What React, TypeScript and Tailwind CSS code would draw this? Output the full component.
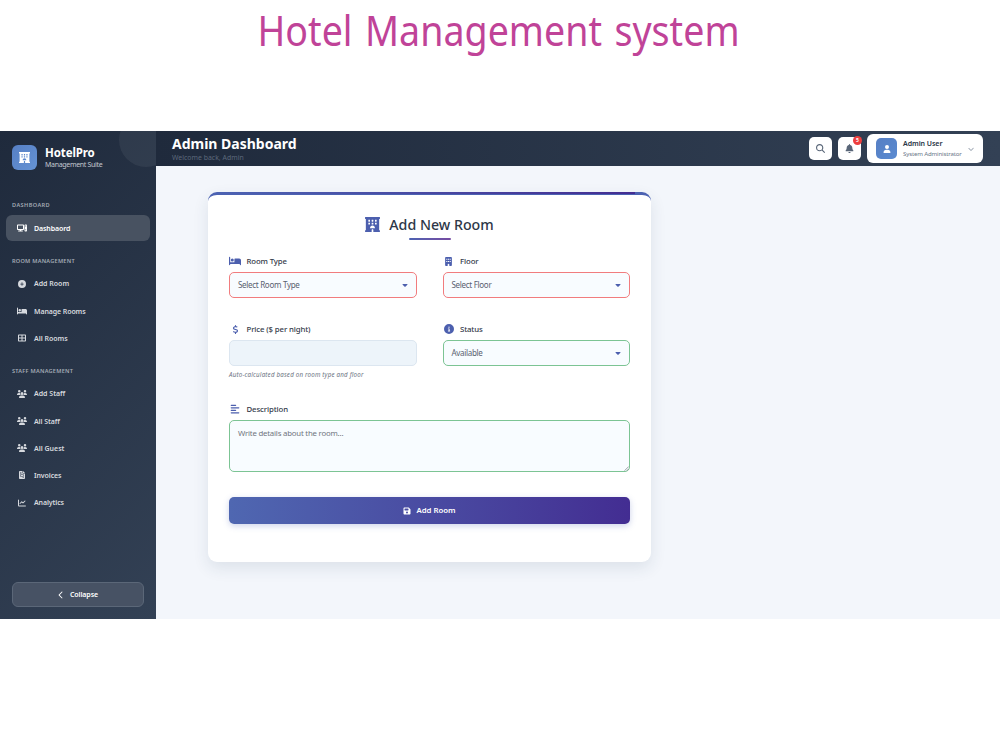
import React from 'react';
import { IconType } from 'react-icons';
import { FaHotel } from 'react-icons/fa';
import {
  FaAlignLeft,
  FaBed,
  FaBell,
  FaBuilding,
  FaCaretDown,
  FaChartLine,
  FaChevronDown,
  FaChevronLeft,
  FaCircleInfo,
  FaCirclePlus,
  FaComputer,
  FaDollarSign,
  FaFileInvoice,
  FaFloppyDisk,
  FaMagnifyingGlass,
  FaTableCellsLarge,
  FaUser,
  FaUsers,
} from 'react-icons/fa6';

type NavItem = { label: string; icon: IconType; size: string; track?: string; active?: boolean };

const navSections: { title: string; track: string; items: NavItem[] }[] = [
  {
    title: 'DASHBOARD',
    track: 'tracking-[0.4px]',
    items: [{ label: 'Dashbaord', icon: FaComputer, size: 'size-[10px]', track: 'tracking-[-0.1px]', active: true }],
  },
  {
    title: 'ROOM MANAGEMENT',
    track: 'tracking-[0.24px]',
    items: [
      { label: 'Add Room', icon: FaCirclePlus, size: 'size-2' },
      { label: 'Manage Rooms', icon: FaBed, size: 'size-[10px]', track: 'tracking-[-0.1px]' },
      { label: 'All Rooms', icon: FaTableCellsLarge, size: 'size-2' },
    ],
  },
  {
    title: 'STAFF MANAGEMENT',
    track: 'tracking-[0.24px]',
    items: [
      { label: 'Add Staff', icon: FaUsers, size: 'size-[10px]' },
      { label: 'All Staff', icon: FaUsers, size: 'size-[10px]', track: 'tracking-[-0.08px]' },
      { label: 'All Guest', icon: FaUsers, size: 'size-[10px]' },
      { label: 'Invoices', icon: FaFileInvoice, size: 'size-2', track: 'tracking-[-0.1px]' },
      { label: 'Analytics', icon: FaChartLine, size: 'size-2', track: 'tracking-[-0.1px]' },
    ],
  },
];

function Sidebar() {
  return (
    <aside className="relative flex w-[156px] shrink-0 flex-col overflow-hidden bg-linear-135 from-[#1f2a3c] to-[#334155]">
      {/* corner circle */}
      <div className="absolute -top-[18px] left-[119px] size-[54px] rounded-full bg-white/[0.06]" />

      <div className="flex h-[68px] items-start gap-2 px-3 pt-3.5">
        <div className="flex size-[25px] items-center justify-center rounded-md bg-linear-135 from-[#567fc4] to-[#6593d4]">
          <FaHotel className="size-[11px] text-white" preserveAspectRatio="none" />
        </div>
        <div className="pt-px">
          <p className="text-[11.5px] leading-[14px] font-bold tracking-[-0.1px] text-white">HotelPro</p>
          <p className="text-[7px] leading-[9px] tracking-[-0.31px] text-[#c3c8d0]">Management Suite</p>
        </div>
      </div>

      <nav className="flex flex-col gap-[13.75px]">
        {navSections.map((section) => (
          <div key={section.title}>
            <p className={`mb-[4.25px] h-3 pl-3 text-[5.6px] leading-3 font-semibold text-[#a3aab5] ${section.track}`}>
              {section.title}
            </p>
            <ul className="flex flex-col gap-[1.75px] px-1.5">
              {section.items.map((item) => (
                <li
                  key={item.label}
                  className={`flex h-[25.5px] items-center rounded-md pl-[11px] ${
                    item.active ? 'bg-[#485261] text-white' : 'text-[#d6d9de]'
                  }`}
                >
                  <span className="flex w-[10px] justify-center">
                    <item.icon className={item.size} />
                  </span>
                  <span className={`pt-[2px] pl-[7px] text-[7px] font-semibold whitespace-nowrap ${item.track ?? ''}`}>
                    {item.label}
                  </span>
                </li>
              ))}
            </ul>
          </div>
        ))}
      </nav>

      <button className="mx-3 mt-auto mb-3 flex h-[25px] items-center justify-center gap-[5px] rounded-md border border-[#5b6778] bg-[#475264] pr-px text-[7px] font-semibold text-white">
        <FaChevronLeft className="size-[8px]" />
        <span className="pt-[1.5px] tracking-[-0.08px]">Collapse</span>
      </button>
    </aside>
  );
}

function Header() {
  return (
    <header className="flex h-[35px] items-center bg-linear-to-r from-[#1f2a3c] to-[#334155] pr-[17px] pl-4">
      <div className="flex-1">
        <h1 className="-mt-px text-[14px] leading-[17px] font-bold text-white">Admin Dashboard</h1>
        <p className="pt-px text-[6.9px] leading-[9px] tracking-[0.02px] text-[#5c687b]">Welcome back, Admin</p>
      </div>
      <button className="mr-[6px] flex size-[23px] items-center justify-center rounded-[5px] bg-white">
        <FaMagnifyingGlass className="size-[9px] text-[#596678]" />
      </button>
      <button className="relative mr-[6px] flex size-[23px] items-center justify-center rounded-[5px] bg-white">
        <FaBell className="size-[9px] text-[#596678]" />
        <span className="absolute -top-px -right-px flex size-[9px] items-center justify-center rounded-full bg-[#ee3e3e] text-[5px] font-bold text-white">
          5
        </span>
      </button>
      <div className="flex h-[29px] w-[116px] items-center rounded-md bg-white pl-[9px]">
        <div className="flex size-[21px] items-center justify-center rounded-[5px] bg-linear-135 from-[#567fc4] to-[#5a8ad0]">
          <FaUser className="size-2 text-white" />
        </div>
        <div className="w-[71px] pt-px pl-[6px]">
          <p className="text-[7px] leading-[10px] font-semibold tracking-[-0.05px] whitespace-nowrap text-[#283445]">Admin User</p>
          <p className="text-[6.1px] leading-[10px] tracking-[-0.16px] whitespace-nowrap text-[#6b7789]">System Administrator</p>
        </div>
        <FaChevronDown className="size-[6px] text-[#8b96a5]" />
      </div>
    </header>
  );
}

function FieldLabel({ icon: Icon, iconClass, children }: { icon: IconType; iconClass: string; children: React.ReactNode }) {
  return (
    <label className="flex h-4 items-center gap-[5px] text-[7.8px] font-medium tracking-[-0.12px] text-[#333a49]">
      <span className="flex w-[12.5px] justify-center">
        <Icon className={`text-[#4c5fae] ${iconClass}`} />
      </span>
      <span className="pt-[2px]">{children}</span>
    </label>
  );
}

function SelectField({ value, border }: { value: string; border: string }) {
  return (
    <div className={`mt-[3px] flex h-[26px] items-center justify-between rounded-[5px] border bg-[#f8fcff] pr-[7px] pl-2 ${border}`}>
      <span className="text-[8px] tracking-[-0.3px] text-[#596170]">{value}</span>
      <FaCaretDown className="size-[8px] text-[#4c5fae]" />
    </div>
  );
}

function RoomForm() {
  return (
    <form className="relative mt-[26px] ml-[52px] h-[370px] w-[443px] rounded-[9px] border-t-[3px] border-[#4c62b2] bg-white px-[21px] shadow-[0_6px_16px_rgba(40,60,90,0.11)]">
      <div className="absolute -top-[3px] left-[9px] h-[2px] w-[418px] bg-linear-to-r from-[#4c62b2] to-[#432d92]" />

      <div className="flex items-center justify-center gap-[9px] pt-[20px]">
        <FaHotel className="size-[15px] text-[#4c5fae]" preserveAspectRatio="none" />
        <h2 className="text-[14.2px] leading-[19px] font-medium text-[#2d3748]">Add New Room</h2>
      </div>
      <div className="mx-auto mt-[4px] h-[2px] w-[42px] rounded bg-linear-to-r from-[#4c62b2] to-[#764ba2]" />

      <div className="mt-[13px] grid grid-cols-2 gap-x-[26px]">
        <div className="h-[68px]">
          <FieldLabel icon={FaBed} iconClass="size-[12px]">Room Type</FieldLabel>
          <SelectField value="Select Room Type" border="border-[#f17c7e]" />
        </div>
        <div className="h-[68px]">
          <FieldLabel icon={FaBuilding} iconClass="size-[9px]">Floor</FieldLabel>
          <SelectField value="Select Floor" border="border-[#f17c7e]" />
        </div>
        <div className="h-[80px]">
          <FieldLabel icon={FaDollarSign} iconClass="size-[9px]">Price ($ per night)</FieldLabel>
          <div className="mt-[3px] h-[26px] rounded-[5px] border border-[#dce6f0] bg-[#edf4fa]" />
          <p className="mt-[4px] text-[6.2px] leading-[9px] tracking-[0.2px] text-[#6b7382] italic">
            Auto-calculated based on room type and floor
          </p>
        </div>
        <div className="h-[80px]">
          <FieldLabel icon={FaCircleInfo} iconClass="size-[10px]">Status</FieldLabel>
          <SelectField value="Available" border="border-[#7cc494]" />
        </div>
      </div>

      <FieldLabel icon={FaAlignLeft} iconClass="size-[10px]">Description</FieldLabel>
      <textarea
        className="mt-[3px] block h-[52px] w-full resize-none rounded-[5px] border border-[#7cc494] bg-[#f8fcff] px-2 py-[6px] text-[7.8px] leading-[12px] tracking-[-0.2px] placeholder:text-[#70757e]"
        placeholder="Write details about the room..."
      />
      {/* resize grip */}
      <svg className="absolute right-[22px] bottom-[91px] size-[5px]" viewBox="0 0 5 5" stroke="#7d8288" strokeWidth="0.7">
        <path d="M0.5 4.7 4.7 0.5M2.8 4.7 4.7 2.8" />
      </svg>

      <button
        type="button"
        className="mt-[25px] flex h-[27px] w-full items-center justify-center gap-[5px] rounded-[5px] bg-linear-to-r from-[#4f67b1] to-[#432d92] text-[7.8px] font-semibold text-white shadow-[0_2px_6px_rgba(76,98,178,0.28)]"
      >
        <FaFloppyDisk className="size-[8px]" />
        Add Room
      </button>
    </form>
  );
}

function App() {
  return (
    <div className="h-[750px] w-[1000px] overflow-hidden bg-white font-['Noto_Sans','Open_Sans',sans-serif]">
      <div className="flex h-[131px] justify-center">
        <p className="h-[60px] origin-center scale-x-[0.895] pr-1 text-[42px] leading-[60px] [word-spacing:3px] whitespace-nowrap text-[#c04398]">
          Hotel Management system
        </p>
      </div>
      <div className="flex h-[488px]">
        <Sidebar />
        <main className="flex-1 bg-[#f3f6fb]">
          <Header />
          <RoomForm />
        </main>
      </div>
    </div>
  );
}

export default App;
